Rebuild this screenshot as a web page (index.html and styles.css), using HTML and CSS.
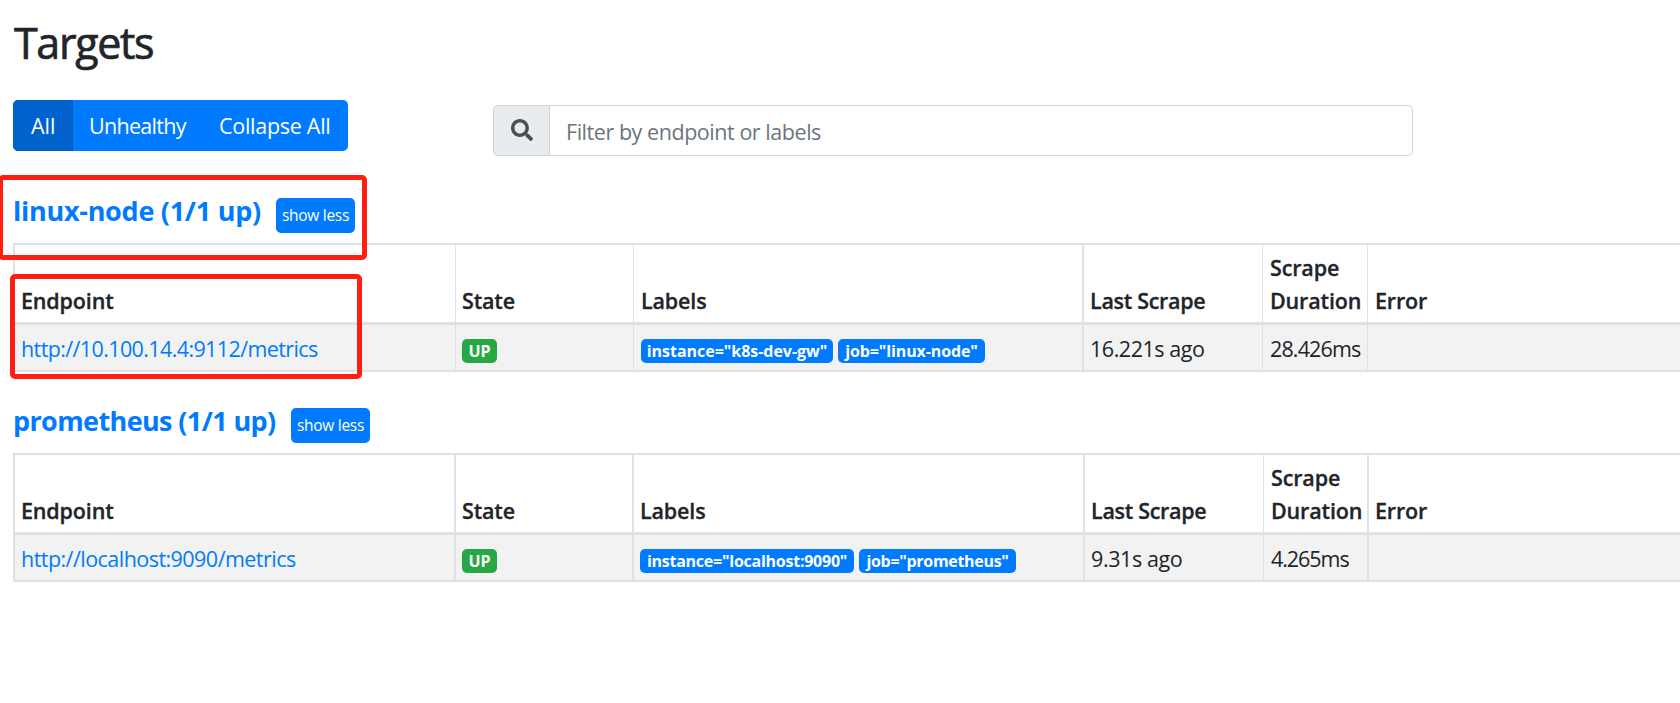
FILE: index.html
```
<!DOCTYPE html>
<html lang="en">
<head>
<meta charset="utf-8">
<title>Targets</title>
<link rel="stylesheet" href="styles.css">
</head>
<body>
<main class="page">
  <h1 class="title">Targets</h1>
  <div class="toolbar">
    <div class="btn-group">
      <button class="btn active">All</button>
      <button class="btn unhealthy">Unhealthy</button>
      <button class="btn collapse">Collapse All</button>
    </div>
    <div class="search">
      <span class="search-icon">
        <svg width="22" height="22" viewBox="0 0 512 512"><path fill="#495057" d="M505 442.700 405.300 343c-4.500-4.500-10.600-7-17-7H372c27.600-35.300 44-79.700 44-128C416 93.100 322.900 0 208 0S0 93.100 0 208s93.100 208 208 208c48.300 0 92.700-16.400 128-44v16.300c0 6.400 2.500 12.500 7 17l99.700 99.700c9.400 9.400 24.600 9.400 33.900 0l28.300-28.300c9.400-9.400 9.400-24.600.1-34zM208 336c-70.700 0-128-57.200-128-128 0-70.700 57.200-128 128-128 70.700 0 128 57.200 128 128 0 70.700-57.200 128-128 128z"/></svg>
      </span>
      <input class="search-input" type="text" placeholder="Filter by endpoint or labels">
    </div>
  </div>

  <section class="pool linux">
    <header class="pool-head">
      <h2 class="pool-name">linux-node (1/1 up)</h2>
      <button class="toggle">show less</button>
      <span class="mark mark-pool"></span>
    </header>
    <table class="targets">
      <colgroup><col class="c-endpoint"><col class="c-state"><col class="c-labels"><col class="c-last"><col class="c-duration"><col class="c-error"></colgroup>
      <thead><tr><th>Endpoint</th><th>State</th><th class="labels">Labels</th><th class="thick last-head">Last Scrape</th><th class="duration-head">Scrape<br>Duration</th><th class="error-head">Error</th></tr></thead>
      <tbody><tr>
        <td><a class="url">http://10.100.14.4:9112/metrics</a></td>
        <td><span class="badge up">UP</span></td>
        <td class="labels"><span class="badges"><span class="badge instance">instance="k8s-dev-gw"</span><span class="badge job">job="linux-node"</span></span></td>
        <td class="thick last">16.221s ago</td><td class="duration">28.426ms</td><td></td>
      </tr></tbody>
    </table>
    <span class="mark mark-endpoint"></span>
  </section>

  <section class="pool prom">
    <header class="pool-head">
      <h2 class="pool-name">prometheus (1/1 up)</h2>
      <button class="toggle">show less</button>
    </header>
    <table class="targets">
      <colgroup><col class="c-endpoint"><col class="c-state"><col class="c-labels"><col class="c-last"><col class="c-duration"><col class="c-error"></colgroup>
      <thead><tr><th>Endpoint</th><th class="thick">State</th><th class="thick">Labels</th><th class="thick last-head">Last Scrape</th><th class="duration-head">Scrape<br>Duration</th><th class="thick">Error</th></tr></thead>
      <tbody><tr>
        <td><a class="url">http://localhost:9090/metrics</a></td>
        <td class="thick"><span class="badge up">UP</span></td>
        <td class="thick"><span class="badges"><span class="badge instance">instance="localhost:9090"</span><span class="badge job">job="prometheus"</span></span></td>
        <td class="thick last">9.31s ago</td><td class="duration">4.265ms</td><td class="thick"></td>
      </tr></tbody>
    </table>
  </section>
</main>
</body>
</html>
```

FILE: styles.css
```
* { box-sizing: border-box; }
body {
  margin: 0;
  overflow: hidden;
  background: #fff;
  color: #212529;
  font: 21.5px/33px "Open Sans", "Noto Sans", sans-serif;
}
button, input { font-family: inherit; margin: 0; }
.page { padding: 16px 0 0 13px; }
.title {
  margin: 0 0 31px 1px;
  font-size: 43px;
  font-weight: 500;
  line-height: 53px;
  letter-spacing: -1.33px;
  -webkit-text-stroke: .7px #212529;
}

.toolbar { display: flex; align-items: flex-start; gap: 145px; height: 75px; }
.btn-group { display: flex; width: 335px; height: 51px; border-radius: 5px; overflow: hidden; }
.btn {
  flex: 1 1 auto;
  padding: 0 0 1px 18px;
  border: 0;
  background: #007bff;
  color: #fff;
  font-size: 21.5px;
  line-height: 33px;
  text-align: left;
  white-space: nowrap;
}
.btn.active { flex: 0 0 60px; background: #0062cc; border: 1px solid #005cbf; padding-left: 17px; }
.btn.unhealthy { flex: 0 0 130px; padding-left: 16px; letter-spacing: -.7px; }
.btn.collapse { padding-left: 16px; letter-spacing: -.28px; }

.search { display: flex; width: 920px; height: 51px; margin-top: 5px; }
.search-icon {
  display: flex;
  align-items: center;
  justify-content: center;
  width: 56px;
  padding-bottom: 1px;
  border: 1px solid #ced4da;
  border-right: 0;
  border-radius: 5px 0 0 5px;
  background: #e9ecef;
}
.search-input {
  flex: 1;
  padding: 2px 16px 0;
  border: 1px solid #ced4da;
  border-radius: 0 5px 5px 0;
  font-size: 21.5px;
  letter-spacing: -.45px;
}
.search-input::placeholder { color: #6c757d; opacity: 1; }

.pool { position: relative; height: 210px; }
.pool-head { position: relative; display: flex; align-items: flex-start; height: 68px; padding-top: 17px; }
.pool-name {
  width: 263px;
  margin: 0;
  color: #007bff;
  font-size: 27px;
  line-height: 37px;
  letter-spacing: -.27px;
  white-space: nowrap;
}
.prom .pool-name { width: 278px; letter-spacing: -.62px; }
.toggle {
  width: 79px;
  height: 35px;
  margin-top: 6px;
  padding: 0 0 2px;
  border: 0;
  border-radius: 5px;
  background: #007bff;
  color: #fff;
  font-size: 15.5px;
  letter-spacing: -.28px;
  white-space: nowrap;
}

.targets { width: 1680px; table-layout: fixed; border-collapse: separate; border-spacing: 0; }
.c-endpoint { width: 442px; }
.c-state { width: 178px; }
.c-labels { width: 449px; }
.c-last { width: 180px; }
.c-duration { width: 105px; }
.prom .c-endpoint { width: 441px; }
.prom .c-labels { width: 451px; }
.prom .c-duration { width: 104px; }
.targets th, .targets td { border-left: 1px solid #dee2e6; text-align: left; white-space: nowrap; }
.targets th {
  height: 82px;
  padding: 0 0 5px 6px;
  border-top: 2px solid #dee2e6;
  border-bottom: 3px solid #dee2e6;
  font-weight: 600;
  letter-spacing: -.15px;
  vertical-align: bottom;
  -webkit-text-stroke: .3px #212529;
}
.targets td {
  height: 47px;
  padding: 7px 0 0 6px;
  border-bottom: 2px solid #dee2e6;
  background: #f2f2f2;
  vertical-align: top;
}
.targets th:first-child, .targets td:first-child, .targets .thick { border-left-width: 2px; }
.targets .labels, .targets .duration, .targets .duration-head, .targets .error-head { padding-left: 7px; }
.targets .last-head { letter-spacing: -.3px; }
.url { color: #007bff; letter-spacing: -.61px; }
.prom .url { letter-spacing: -.54px; }
.last { letter-spacing: -.46px; }
.duration { letter-spacing: -.86px; }
.prom .last { letter-spacing: -.4px; }
.prom .duration { letter-spacing: -1.05px; }

.badges { display: flex; gap: 5px; }
.badge {
  display: block;
  height: 24px;
  margin-top: 7px;
  border-radius: 5px;
  background: #007bff;
  color: #fff;
  font-size: 16px;
  font-weight: 700;
  line-height: 24px;
  text-align: center;
}
.badge.up { width: 35px; background: #28a745; }
.linux .instance { width: 192px; letter-spacing: -.03px; }
.linux .job { width: 147px; letter-spacing: -.12px; }
.prom .instance { width: 214px; letter-spacing: -.25px; }
.prom .job { width: 157px; letter-spacing: -.3px; }

.mark { position: absolute; border: 5px solid #ff1e10; border-radius: 5px; }
.mark-pool { left: -15px; top: 0; width: 369px; height: 85px; }
.mark-endpoint { left: -3px; top: 99px; width: 352px; height: 105px; }
```
